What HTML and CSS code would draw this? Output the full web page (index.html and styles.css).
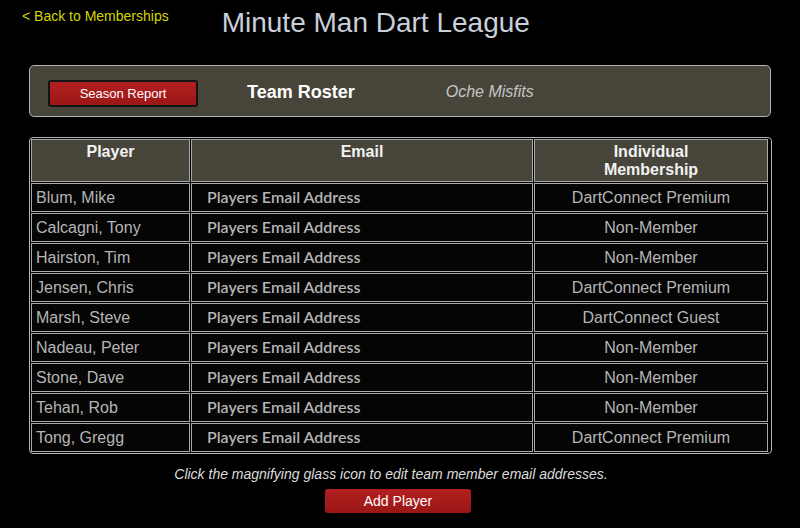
FILE: index.html
```html
<!DOCTYPE html>
<html>
<head>
<meta charset="utf-8">
<link rel="stylesheet" href="styles.css">
</head>
<body>
<div class="page">
  <header class="top">
    <a class="back" href="#">&lt; Back to Memberships</a>
    <h1 class="title">Minute Man Dart League</h1>
  </header>
  <div class="panel">
    <button class="btn season">Season Report</button>
    <div class="roster">Team Roster</div>
    <div class="team">Oche Misfits</div>
  </div>
  <table class="grid">
    <colgroup><col class="c1"><col class="c2"><col class="c3"></colgroup>
    <thead>
      <tr><th>Player</th><th>Email</th><th>Individual<br>Membership</th></tr>
    </thead>
    <tbody>
      <tr><td class="name">Blum, Mike</td><td class="email">Players Email Address</td><td class="mem">DartConnect Premium</td></tr>
      <tr><td class="name">Calcagni, Tony</td><td class="email">Players Email Address</td><td class="mem">Non-Member</td></tr>
      <tr><td class="name">Hairston, Tim</td><td class="email">Players Email Address</td><td class="mem">Non-Member</td></tr>
      <tr><td class="name">Jensen, Chris</td><td class="email">Players Email Address</td><td class="mem">DartConnect Premium</td></tr>
      <tr><td class="name">Marsh, Steve</td><td class="email">Players Email Address</td><td class="mem">DartConnect Guest</td></tr>
      <tr><td class="name">Nadeau, Peter</td><td class="email">Players Email Address</td><td class="mem">Non-Member</td></tr>
      <tr><td class="name">Stone, Dave</td><td class="email">Players Email Address</td><td class="mem">Non-Member</td></tr>
      <tr><td class="name">Tehan, Rob</td><td class="email">Players Email Address</td><td class="mem">Non-Member</td></tr>
      <tr><td class="name">Tong, Gregg</td><td class="email">Players Email Address</td><td class="mem">DartConnect Premium</td></tr>
    </tbody>
  </table>
  <p class="hint">Click the magnifying glass icon to edit team member email addresses.</p>
  <div class="actions"><button class="btn add">Add Player</button></div>
</div>
</body>
</html>
```
FILE: styles.css
```css
html, body {
  margin: 0;
  padding: 0;
  background: #000;
  font-family: "Liberation Sans", Arial, sans-serif;
}
.page {
  width: 742px;
  margin: 0 0 0 29px;
  padding-top: 7px;
}
.top {
  display: flex;
  align-items: flex-start;
  margin-left: -7px;
  height: 58px;
}
.back {
  color: #d6d600;
  font-size: 14px;
  text-decoration: none;
  line-height: 18px;
}
.title {
  margin: 0 0 0 53px;
  font-weight: normal;
  font-size: 28px;
  line-height: 32px;
  color: #c9cfdb;
}
.panel {
  display: flex;
  align-items: center;
  height: 50px;
  background: #47453a;
  border: 1px solid #b4b4b4;
  border-radius: 5px;
  padding-left: 18px;
}
.btn {
  font-family: "Liberation Sans", Arial, sans-serif;
  color: #fff;
  background: linear-gradient(#b31f1f, #9b1717);
  border-radius: 3px;
  cursor: pointer;
}
.season {
  width: 150px;
  height: 27px;
  font-size: 13px;
  border: 2px solid #141414;
  padding: 0;
  margin-top: 4px;
}
.roster {
  margin-left: 49px;
  font-weight: bold;
  font-size: 18px;
  color: #fff;
  margin-top: 2px;
}
.team {
  margin-left: 91px;
  font-style: italic;
  font-size: 16px;
  color: #c4c4c4;
  margin-top: 2px;
}
.grid {
  margin-top: 20px;
  width: 742px;
  border: 1px solid #b4b4b4;
  border-radius: 4px;
  border-spacing: 1px;
  padding-right: 2px;
  table-layout: fixed;
}
.c1 { width: 159px; }
.c2 { width: 342px; }
.c3 { width: 234px; }
.grid th, .grid td {
  border: 1px solid #a8a8a8;
  font-size: 16px;
  box-sizing: border-box;
}
.grid th {
  background: #47453a;
  color: #f2f2f2;
  font-weight: bold;
  height: 43px;
  vertical-align: top;
  line-height: 18px;
  padding: 3px 2px 2px;
}
.grid td {
  background: #050505;
  color: #b5b5b5;
  height: 29px;
  padding: 0 4px;
  line-height: 18px;
}
.grid td.email {
  font-family: Lato, "Liberation Sans", sans-serif;
  font-size: 16px;
  font-weight: 600;
  color: #b4b4b4;
  padding-left: 15px;
  padding-bottom: 2px;
}
.grid td.mem {
  text-align: center;
}
.hint {
  margin: 12px 0 0;
  text-align: center;
  font-style: italic;
  font-size: 14px;
  color: #dcdcdc;
  padding-right: 18px;
  line-height: 16px;
}
.actions {
  display: flex;
  justify-content: center;
  margin-top: 7px;
  padding-right: 4px;
}
.add {
  width: 146px;
  height: 24px;
  font-size: 14px;
  border: none;
  padding: 0;
}
```
